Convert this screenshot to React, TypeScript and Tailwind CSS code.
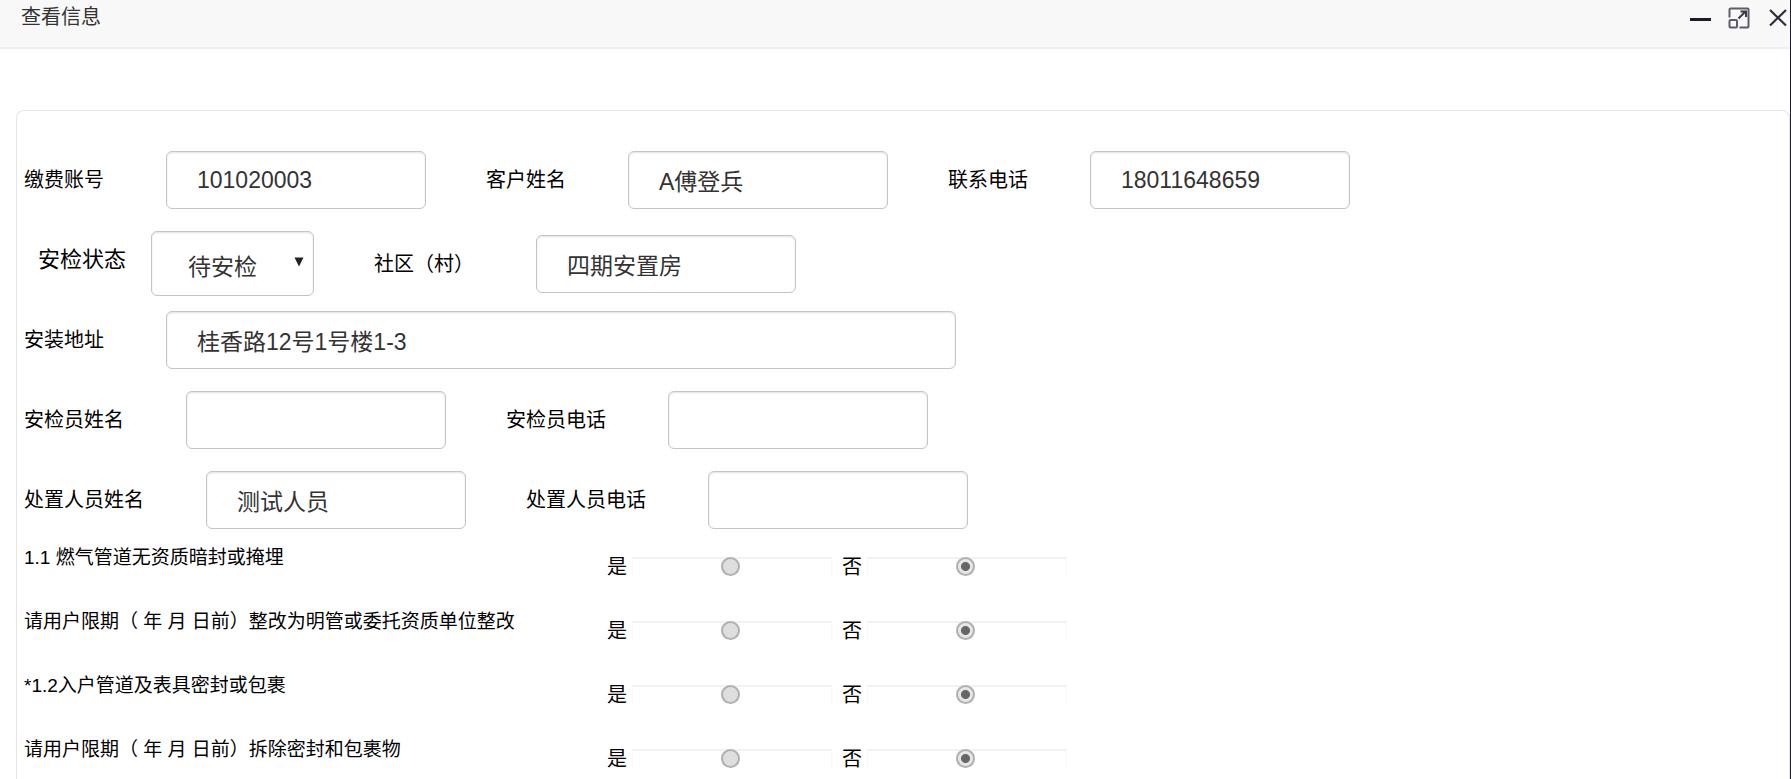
import React, { useId } from 'react';

interface FieldProps {
  label: string;
  value?: string;
  wide?: boolean;
}

interface QuestionProps {
  name: string;
  text: string;
}

const questions = [
  { name: 'q1', text: '1.1 燃气管道无资质暗封或掩埋' },
  { name: 'q1-fix', text: '请用户限期（ 年 月 日前）整改为明管或委托资质单位整改' },
  { name: 'q2', text: '*1.2入户管道及表具密封或包裹' },
  { name: 'q2-fix', text: '请用户限期（ 年 月 日前）拆除密封和包裹物' },
];

function Field({ label, value = '', wide = false }: FieldProps) {
  const id = useId();
  return (
    <div className="flex shrink-0 items-center gap-[62px]">
      <label htmlFor={id} className="whitespace-nowrap text-[20px] leading-7 text-black">
        {label}
      </label>
      <input
        id={id}
        type="text"
        defaultValue={value}
        className={`h-[58px] rounded-md border border-[#c4c4c4] bg-white px-[30px] text-[23px] text-[#333] shadow-[inset_0_1px_2px_rgba(0,0,0,0.12)] outline-none ${
          wide ? 'w-[790px]' : 'w-[260px]'
        }`}
      />
    </div>
  );
}

function StatusSelect() {
  return (
    <div className="flex items-center gap-[25px] pl-3.5">
      <label htmlFor="status" className="whitespace-nowrap pb-2 text-[22px] leading-7 text-black">
        安检状态
      </label>
      <div className="relative">
        <select
          id="status"
          defaultValue="pending"
          className="h-[65px] w-[163px] appearance-none rounded-md border border-[#c4c4c4] bg-white pl-9 pt-2 text-[23px] text-[#333] shadow-[inset_0_1px_2px_rgba(0,0,0,0.12)] outline-none"
        >
          <option value="pending">待安检</option>
        </select>
        <svg viewBox="0 0 10 10" className="pointer-events-none absolute right-2.5 top-[26px] h-2.5 w-2.5" aria-hidden="true">
          <path d="M0.5 0.5h9L5 9.5z" fill="#222" />
        </svg>
      </div>
    </div>
  );
}

function RadioOption({ name, label, checked }: { name: string; label: string; checked: boolean }) {
  return (
    <label className="flex items-start gap-[5px] text-[20px] leading-5 text-black">
      {label}
      <span className="flex h-5 w-[200px] justify-center border-x border-t-2 border-x-[#f9f9f9] border-t-[#f2f2f2]">
        <input
          type="radio"
          name={name}
          defaultChecked={checked}
          className="-mt-0.5 mr-1 h-[19px] w-[19px] appearance-none rounded-full border-2 border-[#b0b0b0] bg-[#dedede] checked:bg-[radial-gradient(circle,#666_0,#666_4px,#e6e6e6_5px)]"
        />
      </span>
    </label>
  );
}

function Question({ name, text }: QuestionProps) {
  return (
    <fieldset className="flex h-16 items-start">
      <div className="w-[583px] shrink-0 whitespace-nowrap text-[19px] leading-[34px] text-black">{text}</div>
      <div className="flex gap-2.5 pt-4">
        <RadioOption name={name} label="是" checked={false} />
        <RadioOption name={name} label="否" checked />
      </div>
    </fieldset>
  );
}

export default function App() {
  return (
    <div className="flex h-screen flex-col overflow-hidden border-r border-[#1c1c2b] bg-white font-['Liberation_Sans','Noto_Sans_CJK_SC',sans-serif]">
      <header className="flex h-[49px] shrink-0 items-start justify-between border-b-2 border-[#eee] bg-[#f8f8f8] pl-[21px]">
        <h1 className="text-[20px] leading-[34px] text-[#333]">查看信息</h1>
        <div className="flex gap-[15px] pt-1.5 text-[#2e2d3c]">
          <button type="button" aria-label="最小化">
            <svg width="24" height="24" viewBox="0 0 24 24">
              <path d="M2 13.5h21" stroke="#1e1a2c" strokeWidth="3" />
            </svg>
          </button>
          <button type="button" aria-label="最大化">
            <svg width="24" height="24" viewBox="0 0 24 24" fill="none" stroke="#5d5c69" strokeWidth="2">
              <path d="M2.500 11.500V3.500q0-1 1-1h17q1 0 1 1v17q0 1-1 1h-8" />
              <rect x="2.500" y="14" width="7.500" height="7.500" rx="1" />
              <path d="M11.500 12.500l7-7M13.500 5.500h5.500v5.500" stroke="#3b3a48" />
            </svg>
          </button>
          <button type="button" aria-label="关闭">
            <svg width="24" height="24" viewBox="0 0 24 24" fill="none" stroke="currentColor" strokeWidth="2.2">
              <path d="M4 4l16 15.500M20 4L4 19.500" />
            </svg>
          </button>
        </div>
      </header>

      <main className="ml-4 mt-[61px] flex-1 overflow-hidden rounded-t-lg border border-b-0 border-[#e6e6e6] pl-[7px] pt-10">
        <form>
          <div className="flex gap-[60px]">
            <Field label="缴费账号" value="101020003" />
            <Field label="客户姓名" value="A傅登兵" />
            <Field label="联系电话" value="18011648659" />
          </div>
          <div className="mt-[22px] flex items-center gap-[60px]">
            <StatusSelect />
            <Field label="社区（村）" value="四期安置房" />
          </div>
          <div className="mt-[15px] flex">
            <Field label="安装地址" value="桂香路12号1号楼1-3" wide />
          </div>
          <div className="mt-[22px] flex gap-[60px]">
            <Field label="安检员姓名" />
            <Field label="安检员电话" />
          </div>
          <div className="mt-[22px] flex gap-[60px]">
            <Field label="处置人员姓名" value="测试人员" />
            <Field label="处置人员电话" />
          </div>
          <div className="mt-3">
            {questions.map((q) => (
              <Question key={q.name} name={q.name} text={q.text} />
            ))}
          </div>
        </form>
      </main>
    </div>
  );
}
